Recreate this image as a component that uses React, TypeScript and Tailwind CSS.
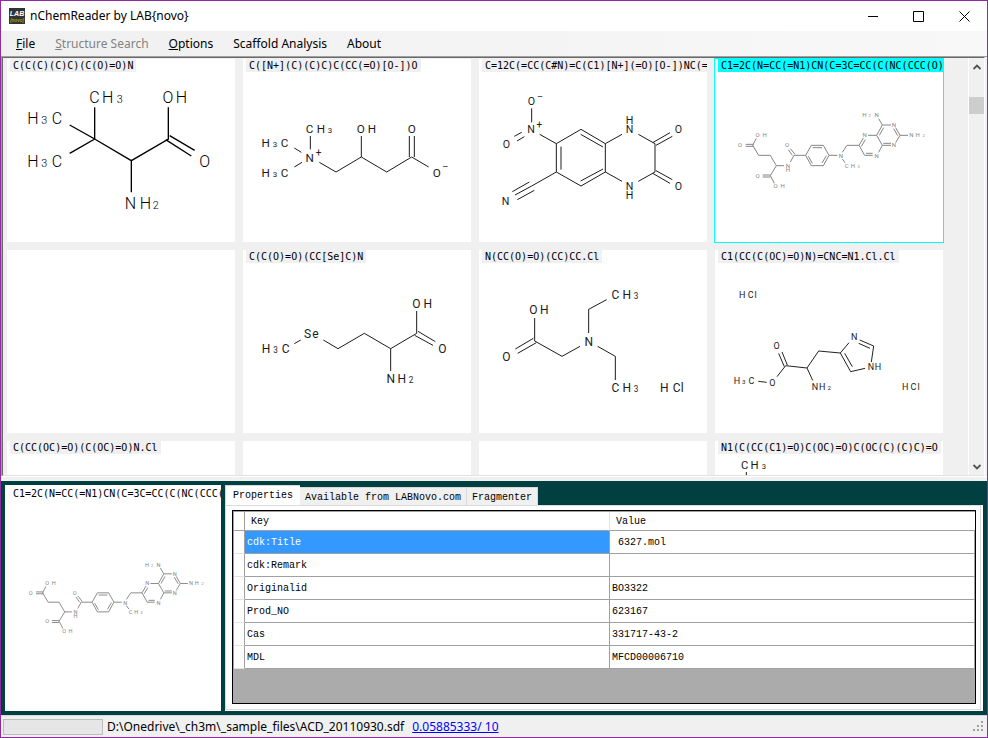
import React, { useState } from "react";

type Label = { text: string; xs: number[]; y: number; size?: number };
type Molecule = { bonds: string; labels: Label[]; size: number; color: string; width: number };

const at = (text: string, xs: number[], y: number, size?: number): Label => ({ text, xs, y, size });

const tertLeucine: Molecule = {
  size: 48,
  color: "#000000",
  width: 4,
  bonds:
    "M284 154V249M209 207L284 249L209 292M284 249L394 314L505 249V154M394 314V409M509 239L584 283M497 251L574 300",
  labels: [
    at("CH3", [283, 323, 359], 142),
    at("H3C", [99, 133, 171], 204),
    at("H3C", [99, 133, 171], 333),
    at("OH", [504, 544], 142),
    at("O", [614], 332),
    at("NH2", [391, 436, 467], 458),
  ],
};

const carnitine: Molecule = {
  size: 35,
  color: "#1c1c1c",
  width: 3,
  bonds:
    "M211 240V280M163 276L184 289M163 333L186 319M238 319L288 348L364 303L440 348L515 303L566 333M364 240V303M508 240V303M523 240V303",
  labels: [
    at("CH3", [209, 243, 270], 231),
    at("H3C", [77, 105, 134], 274),
    at("H3C", [77, 105, 134], 363),
    at("N", [209], 319),
    at("+", [236], 299, 30),
    at("OH", [362, 396], 231),
    at("O", [515], 231),
    at("O", [590], 362),
    at("–", [616], 343, 28),
  ],
};

const quinoxaline: Molecule = {
  size: 32,
  color: "#1c1c1c",
  width: 3,
  bonds:
    "M170 157V199M194 235L244 263M118 241L140 229M126 255L148 242M244 263L318 220L391 263V348L318 390L244 348ZM258 272V341M317 235L384 273M317 375L384 339M244 348L170 390L120 417M112 407L163 378M127 431L178 403M391 263L441 235M490 235L540 263V348L490 376M441 376L391 348M533 260L585 230M543 268L592 241M543 344L592 371M533 352L585 382",
  labels: [
    at("O", [169], 147),
    at("–", [195], 132, 28),
    at("N", [168], 230),
    at("+", [193], 217, 30),
    at("O", [94], 276),
    at("H", [464], 205),
    at("N", [464], 230),
    at("O", [610], 231),
    at("N", [464], 401),
    at("H", [464], 429),
    at("O", [610], 402),
    at("N", [92], 446),
  ],
};

const methotrexate: Molecule = {
  size: 18,
  color: "#858585",
  width: 3,
  bonds:
    "M101 265H125M101 271H125M133 247L122 268L140 298H175L193 329H216M193 329L175 359L187 382M152 357H175M152 363H175M235 318L246 298H281M241 298L229 281M249 295L235 278M281 298L298 268H334L351 298L334 329H298ZM302 275H330M343 299L330 321M301 322L289 301M351 298H376M391 289L405 268H441M391 309L399 320M454 246L441 268L458 298H482M448 271L460 251M462 292H482M468 238H494L511 268L500 289M494 238L511 207H537M502 238L515 215M551 215L564 238L551 260M545 218L557 239M537 268H511M537 262H514M511 207L500 188M564 238H588",
  labels: [
    at("H2N", [457, 473, 494], 184),
    at("N", [546], 214),
    at("NH2", [598, 617, 635], 244),
    at("N", [546], 274),
    at("N", [458], 244),
    at("N", [494], 306),
    at("N", [387], 306),
    at("CH3", [404, 423, 440], 337),
    at("N", [228], 335),
    at("H", [228], 349),
    at("O", [225], 274),
    at("OH", [137, 158], 244),
    at("O", [84], 274),
    at("O", [137], 366),
    at("OH", [191, 212], 397),
  ],
};

const selenomethionine: Molecule = {
  size: 36,
  color: "#1c1c1c",
  width: 3,
  bonds:
    "M163 293L182 282M250 282L294 308L373 262L452 308L530 262V195M452 308V375M524 268L579 298M534 256L586 287",
  labels: [
    at("Se", [203, 226], 276),
    at("H3C", [78, 107, 137], 321),
    at("OH", [529, 563], 186),
    at("O", [607], 321),
    at("NH2", [452, 485, 513], 411),
  ],
};

const diethylglycine: Molecule = {
  size: 36,
  color: "#1c1c1c",
  width: 3,
  bonds:
    "M395 161L341 190V261M368 301L421 331V402M315 301L261 331L179 285V216M175 277L121 309M184 290L128 322",
  labels: [
    at("CH3", [421, 455, 483], 159),
    at("N", [341], 300),
    at("CH3", [421, 455, 483], 438),
    at("HCl", [568, 605, 622], 438),
    at("O", [94], 345),
    at("OH", [175, 208], 204),
  ],
};

const histidineEster: Molecule = {
  size: 27,
  color: "#222222",
  width: 3,
  bonds:
    "M411 290L385 321L416 377L459 367M478 348L485 300L443 282M398 322L421 362M440 292L474 307M385 321L320 315L285 366L221 359L195 392M200 322L217 362M210 318L226 357M164 409L139 406M285 366L302 403",
  labels: [
    at("HCl", [91, 116, 131], 157),
    at("N", [427], 283),
    at("NH", [477, 498], 373),
    at("O", [194], 310),
    at("O", [181], 420),
    at("H3C", [75, 95, 118], 415),
    at("NH2", [309, 331, 352], 433),
    at("HCl", [580, 604, 620], 433),
  ],
};

const bocSuccinimide: Molecule = {
  size: 34,
  color: "#1c1c1c",
  width: 3,
  bonds: "M103 678V720",
  labels: [at("CH3", [98, 128, 156], 669)],
};

function Structure({ molecule, viewBox, className }: { molecule: Molecule; viewBox: string; className: string }) {
  return (
    <svg viewBox={viewBox} className={className} role="img" aria-label="Chemical structure">
      <path d={molecule.bonds} fill="none" stroke={molecule.color} strokeWidth={molecule.width} />
      <g
        fill={molecule.color}
        fontFamily="Roboto, 'Liberation Sans', Arial, sans-serif"
        fontWeight={molecule.size > 40 ? 300 : 400}
        textAnchor="middle"
      >
        {molecule.labels.map((label, i) => {
          const size = label.size ?? molecule.size;
          return (
            <text key={i} y={label.y} fontSize={size}>
              {label.text.split("").map((ch, j) => (
                <tspan key={j} x={label.xs[j]} fontSize={/\d/.test(ch) ? size * 0.68 : size}>
                  {ch}
                </tspan>
              ))}
            </text>
          );
        })}
      </g>
    </svg>
  );
}

type Card = { smiles?: string; molecule?: Molecule; viewBox?: string };

const selectedSmiles = "C1=2C(N=CC(=N1)CN(C=3C=CC(C(NC(CCC(O)=O)C(O)=O)=O)=CC3)C)N=C(N)N=C2N";

const cards: Card[] = [
  { smiles: "C(C(C)(C)C)(C(O)=O)N", molecule: tertLeucine, viewBox: "21 9 684 549" },
  { smiles: "C([N+](C)(C)C)C(CC(=O)[O-])O", molecule: carnitine, viewBox: "9 9 684 549" },
  { smiles: "C=12C(=CC(C#N)=C(C1)[N+](=O)[O-])NC(=O)C(N2)=O", molecule: quinoxaline, viewBox: "12 9 684 549" },
  { smiles: selectedSmiles, molecule: methotrexate, viewBox: "9 9 684 549" },
  {},
  { smiles: "C(C(O)=O)(CC[Se]C)N", molecule: selenomethionine, viewBox: "9 12 684 549" },
  { smiles: "N(CC(O)=O)(CC)CC.Cl", molecule: diethylglycine, viewBox: "12 12 684 549" },
  { smiles: "C1(CC(C(OC)=O)N)=CNC=N1.Cl.Cl", molecule: histidineEster, viewBox: "9 12 684 549" },
  { smiles: "C(CC(OC)=O)(C(OC)=O)N.Cl" },
  {},
  {},
  { smiles: "N1(C(CC(C1)=O)C(OC)=O)C(OC(C)(C)C)=O", molecule: bocSuccinimide, viewBox: "9 585 684 549" },
];

const properties: [string, string][] = [
  ["cdk:Title", "6327.mol"],
  ["cdk:Remark", ""],
  ["Originalid", "BO3322"],
  ["Prod_NO", "623167"],
  ["Cas", "331717-43-2"],
  ["MDL", "MFCD00006710"],
];

const tabs = ["Properties", "Available from LABNovo.com", "Fragmenter"];

function TitleBar() {
  return (
    <header className="flex h-[30px] shrink-0 items-center bg-white pl-2">
      <svg viewBox="0 0 16 16" className="size-4" aria-hidden="true">
        <rect width="16" height="16" fill="#2f3437" />
        <text x="8" y="8" fontSize="7" fontWeight="bold" fontStyle="italic" fill="#ffffff" textAnchor="middle" fontFamily="'Liberation Sans', sans-serif">
          LAB
        </text>
        <text x="8" y="14" fontSize="5" fontStyle="italic" fill="#d8c400" textAnchor="middle" fontFamily="'Liberation Sans', sans-serif">
          {"{novo}"}
        </text>
      </svg>
      <h1 className="ml-[5px] flex-1 text-xs leading-5 text-black">nChemReader by LAB{"{novo}"}</h1>
      <button aria-label="Minimize" className="flex h-full w-[45px] items-center justify-center">
        <svg viewBox="0 0 11 11" className="size-[11px]"><path d="M0 5.5H10" stroke="#000" fill="none" /></svg>
      </button>
      <button aria-label="Maximize" className="flex h-full w-[45px] items-center justify-center">
        <svg viewBox="0 0 11 11" className="size-[11px]"><path d="M.5 .5H10.5V10.5H.5Z" stroke="#000" fill="none" /></svg>
      </button>
      <button aria-label="Close" className="flex h-full w-[46px] items-center justify-center">
        <svg viewBox="0 0 11 11" className="size-[11px]"><path d="M.5 .5L10.5 10.5M10.5 .5L.5 10.5" stroke="#000" fill="none" /></svg>
      </button>
    </header>
  );
}

function MenuBar() {
  return (
    <nav className="flex h-[25px] shrink-0 items-center gap-5 bg-linear-to-r from-[#f0f0f0] to-[#f8f8f8] pl-[15px] text-xs leading-5 text-black">
      <button><u>F</u>ile</button>
      <button disabled className="text-[#838383]"><u>S</u>tructure Search</button>
      <button><u>O</u>ptions</button>
      <button>Scaffold Analysis</button>
      <button>About</button>
    </nav>
  );
}

function Gallery() {
  const [selected, setSelected] = useState(3);
  return (
    <main className="flex min-h-0 flex-1 border-t border-l border-[#a0a0a0]">
      <div className="flex min-w-0 flex-1 border-t border-r border-b border-l border-t-[#696969] border-r-white border-b-[#e3e3e3] border-l-[#696969]">
        <div className="flex min-w-0 flex-1 flex-wrap content-start gap-2 overflow-hidden pt-px pl-1">
          {cards.map((card, i) => (
            <article
              key={i}
              onClick={() => setSelected(i)}
              className={
                i === selected
                  ? "relative h-[183px] w-[228px] bg-white outline outline-[#00ffff]"
                  : "relative h-[183px] w-[228px] bg-white"
              }
            >
              {card.molecule && (
                <Structure molecule={card.molecule} viewBox={card.viewBox!} className="absolute inset-0 size-full" />
              )}
              {card.smiles && (
                <div className="relative flex pl-[3px]">
                  <span
                    className={
                      i === selected
                        ? "h-[13px] overflow-hidden bg-[#00ffff] pl-[3px] font-['DejaVu_Sans_Mono',monospace] text-[10px] leading-[13px] whitespace-nowrap text-black"
                        : "h-[13px] overflow-hidden bg-[#f0f0f0] px-[3px] font-['DejaVu_Sans_Mono',monospace] text-[10px] leading-[13px] whitespace-nowrap text-black"
                    }
                  >
                    {card.smiles}
                  </span>
                </div>
              )}
            </article>
          ))}
        </div>
        <div className="flex w-4 flex-col border-l border-white">
          <button aria-label="Scroll up" className="flex h-[17px] items-center justify-center">
            <svg viewBox="0 0 8 6" className="h-1.5 w-2"><path d="M.5 5L4 1.5L7.5 5" stroke="#505050" strokeWidth="1.8" fill="none" /></svg>
          </button>
          <div className="flex-1 pt-[22px]">
            <div className="h-[17px] bg-[#cdcdcd]" />
          </div>
          <button aria-label="Scroll down" className="flex h-[17px] items-center justify-center">
            <svg viewBox="0 0 8 6" className="h-1.5 w-2"><path d="M.5 1L4 4.5L7.5 1" stroke="#505050" strokeWidth="1.8" fill="none" /></svg>
          </button>
        </div>
      </div>
      <div className="w-0.5 bg-[#f0f0f0]" />
    </main>
  );
}

function PropertyTable() {
  return (
    <div className="min-h-0 flex-1 border border-black bg-[#ababab]">
      <table className="w-full table-fixed border-separate border-spacing-0 border-t border-l border-[#a0a0a0] bg-white text-left">
        <colgroup>
          <col className="w-[11px]" />
          <col />
          <col />
        </colgroup>
        <thead>
          <tr className="h-[19px]">
            <th className="border-r border-b border-[#a0a0a0] p-0" aria-label="Row" />
            <th className="border-r border-b border-r-[#e3e3e3] border-b-[#a0a0a0] p-0 pt-0.5 pl-1.5 font-normal">Key</th>
            <th className="border-b border-[#a0a0a0] p-0 pt-0.5 pl-1.5 font-normal">Value</th>
          </tr>
        </thead>
        <tbody>
          {properties.map(([key, value], i) => (
            <tr key={key} className="h-[23px]">
              <td className="border-r border-b border-r-[#a0a0a0] border-b-[#e3e3e3] p-0" />
              <td
                className={
                  i === 0
                    ? "border-r border-b border-[#a0a0a0] bg-[#3399ff] p-0 pt-0.5 pl-0.5 text-white"
                    : "border-r border-b border-[#a0a0a0] p-0 pt-0.5 pl-0.5"
                }
              >
                {key}
              </td>
              <td
                className={
                  i === 0
                    ? "border-r border-b border-[#a0a0a0] p-0 pt-0.5 pl-2"
                    : "border-r border-b border-[#a0a0a0] p-0 pt-0.5 pl-0.5"
                }
              >
                {value}
              </td>
            </tr>
          ))}
        </tbody>
      </table>
    </div>
  );
}

function DetailPane() {
  const [active, setActive] = useState(0);
  return (
    <section className="flex h-[234px] shrink-0 gap-1 bg-[#004040] p-1">
      <div className="relative w-[216px] shrink-0 overflow-hidden bg-white">
        <Structure molecule={methotrexate} viewBox="1.5 -78 693 725" className="absolute inset-0 size-full" />
        <p className="relative ml-2 overflow-hidden pt-0.5 font-['DejaVu_Sans_Mono',monospace] text-[10px] leading-[13px] whitespace-nowrap text-black">
          {selectedSmiles}
        </p>
      </div>
      <div className="flex min-w-0 flex-1 flex-col font-['Liberation_Mono','Courier_New',monospace] text-[10px] leading-3 text-black">
        <div role="tablist" className="flex h-5 shrink-0 items-end">
          {tabs.map((tab, i) => (
            <button
              key={tab}
              role="tab"
              aria-selected={i === active}
              onClick={() => setActive(i)}
              className={
                i === active
                  ? "h-5 border-t border-l border-[#d9d9d9] bg-white px-[7px]"
                  : "h-[18px] border-t border-r border-[#d9d9d9] bg-[#f0f0f0] px-[5px] pt-0.5"
              }
            >
              {tab}
            </button>
          ))}
        </div>
        <div role="tabpanel" className="flex min-h-0 flex-1 bg-white pr-0.5 pb-px">
          <div className="flex min-w-0 flex-1 border border-[#dcdcdc] pt-1 pr-[4px] pb-[5px] pl-1.5">
            <PropertyTable />
          </div>
        </div>
      </div>
    </section>
  );
}

function StatusBar() {
  return (
    <footer className="flex h-[22px] shrink-0 items-center border-t border-[#d7d7d7] bg-[#f0f0f0] pl-0.5 text-xs leading-5 text-black">
      <div role="progressbar" aria-label="Loading" className="h-4 w-[100px] border border-[#bcbcbc] bg-[#e6e6e6]" />
      <span className="ml-1">D:\Onedrive\_ch3m\_sample_files\ACD_20110930.sdf</span>
      <a href="#page" className="ml-2 text-[#0000ff] underline">0.05885333/ 10</a>
      <svg viewBox="0 0 11 11" className="mr-[3px] ml-auto size-[11px]" aria-hidden="true">
        <path d="M8 0h2v2h-2zM4 4h2v2h-2zM8 4h2v2h-2zM0 8h2v2h-2zM4 8h2v2h-2zM8 8h2v2h-2z" fill="#a0a0a0" />
      </svg>
    </footer>
  );
}

export default function App() {
  return (
    <div className="flex h-screen flex-col border border-[#8f2ba0] bg-[#f0f0f0] font-['Noto_Sans','Open_Sans',sans-serif]">
      <TitleBar />
      <MenuBar />
      <Gallery />
      <div className="h-[5px] shrink-0 border-t border-white" />
      <DetailPane />
      <StatusBar />
    </div>
  );
}
